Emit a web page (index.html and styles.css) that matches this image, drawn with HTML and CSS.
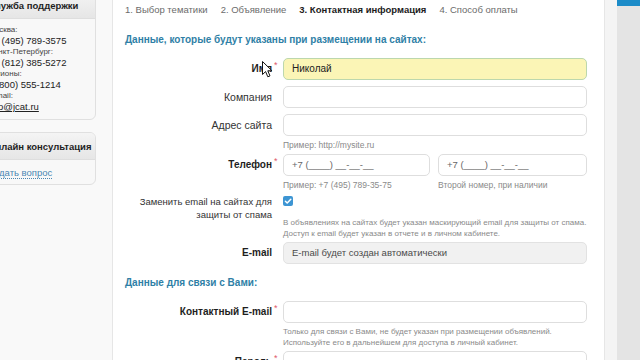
FILE: index.html
```html
<!DOCTYPE html>
<html lang="ru">
<head>
    <meta charset="UTF-8">
    <meta name="viewport" content="width=device-width, initial-scale=1.0">
    <title>Подача объявления — контактная информация</title>
    <link rel="stylesheet" href="styles.css">
</head>
<body>
    <div class="page">
        <aside class="sidebar">
            <div class="box box-support">
                <div class="box-head">Служба поддержки</div>
                <div class="box-body">
                    <div class="contact">
                        <span class="contact-label">Москва:</span>
                        <span class="contact-value">+7 (495) 789-3575</span>
                    </div>
                    <div class="contact">
                        <span class="contact-label">Санкт-Петербург:</span>
                        <span class="contact-value">+7 (812) 385-5272</span>
                    </div>
                    <div class="contact">
                        <span class="contact-label">Регионы:</span>
                        <span class="contact-value">8 (800) 555-1214</span>
                    </div>
                    <div class="contact">
                        <span class="contact-label">E-mail:</span>
                        <a href="#" class="contact-value contact-mail">info@jcat.ru</a>
                    </div>
                </div>
            </div>

            <div class="box">
                <div class="box-head">Онлайн консультация</div>
                <div class="box-body box-body-link">
                    <a href="#" class="ask-link">Задать вопрос</a>
                </div>
            </div>
        </aside>

        <main class="main">
            <nav class="steps">
                <span class="step">1. Выбор тематики</span>
                <span class="step">2. Объявление</span>
                <span class="step active">3. Контактная информация</span>
                <span class="step">4. Способ оплаты</span>
            </nav>

            <h2 class="section-title">Данные, которые будут указаны при размещении на сайтах:</h2>

            <div class="form">
                <div class="row row-name">
                    <div class="label bold">Имя<span class="star">*</span></div>
                    <div class="field">
                        <div class="input input-filled">Николай</div>
                    </div>
                    <svg class="cursor" width="12" height="17" viewBox="0 0 12 17">
                        <path d="M0.5 0.5 L0.5 13.5 L3.6 10.6 L5.8 15.8 L8 14.9 L5.8 9.8 L10 9.8 Z" fill="#fff" stroke="#111" stroke-width="1" stroke-linejoin="round"/>
                    </svg>
                </div>

                <div class="row">
                    <div class="label">Компания</div>
                    <div class="field">
                        <div class="input"></div>
                    </div>
                </div>

                <div class="row row-hint">
                    <div class="label">Адрес сайта</div>
                    <div class="field">
                        <div class="input"></div>
                        <div class="hint">Пример: http://mysite.ru</div>
                    </div>
                </div>

                <div class="row row-hint">
                    <div class="label bold">Телефон<span class="star">*</span></div>
                    <div class="field phones">
                        <div>
                            <div class="input input-mask">+7 (____) __-__-__</div>
                            <div class="hint">Пример: +7 (495) 789-35-75</div>
                        </div>
                        <div>
                            <div class="input input-mask">+7 (____) __-__-__</div>
                            <div class="hint">Второй номер, при наличии</div>
                        </div>
                    </div>
                </div>

                <div class="row row-check">
                    <div class="label label-multi">Заменить email на сайтах для<br>защиты от спама</div>
                    <div class="field">
                        <div class="check-line">
                            <span class="checkbox">
                                <svg width="10" height="10" viewBox="0 0 10 10">
                                    <path d="M2.4 5.2 L4.2 7 L7.8 3.2" fill="none" stroke="#fff" stroke-width="1.5" stroke-linecap="round" stroke-linejoin="round"/>
                                </svg>
                            </span>
                        </div>
                        <div class="hint hint-multi">В объявлениях на сайтах будет указан маскирующий email для защиты от спама.<br>Доступ к email будет указан в отчете и в личном кабинете.</div>
                    </div>
                </div>

                <div class="row">
                    <div class="label bold">E-mail</div>
                    <div class="field">
                        <div class="input input-disabled">E-mail будет создан автоматически</div>
                    </div>
                </div>
            </div>

            <h2 class="section-title section-contact">Данные для связи с Вами:</h2>

            <div class="form">
                <div class="row row-hint">
                    <div class="label bold">Контактный E-mail<span class="star">*</span></div>
                    <div class="field">
                        <div class="input"></div>
                        <div class="hint hint-multi">Только для связи с Вами, не будет указан при размещении объявлений.<br>Используйте его в дальнейшем для доступа в личный кабинет.</div>
                    </div>
                </div>

                <div class="row">
                    <div class="label bold">Пароль<span class="star">*</span></div>
                    <div class="field">
                        <div class="input"></div>
                    </div>
                </div>
            </div>
        </main>

        <div class="gutter"></div>
        <div class="rail"></div>
    </div>
</body>
</html>
```

FILE: styles.css
```css
:root {
    --text-color: #2b2b2b;
    --text-muted: #6b6b6b;
    --hint-color: #8a8a8a;
    --title-color: #2f7fa6;
    --border-color: #dedede;
    --panel-border: #e6e6e6;
    --page-bg: #f9f9f9;
    --link-color: #4a87b3;
    --star-color: #e0576b;
    --radius: 5px;
}

* {
    margin: 0;
    padding: 0;
    box-sizing: border-box;
}

html, body {
    height: 100%;
}

body {
    font-family: "Liberation Sans", Arial, sans-serif;
    color: var(--text-color);
    background: var(--page-bg);
    overflow: hidden;
}

.page {
    display: flex;
    height: 360px;
    overflow: hidden;
}

/* sidebar */

.sidebar {
    flex: none;
    width: 119px;
    margin-left: -23px;
    margin-top: -9px;
    display: flex;
    flex-direction: column;
    gap: 12px;
}

.box {
    background: #f8f8f8;
    border: 1px solid #e0e0e0;
    border-radius: 6px;
    overflow: hidden;
}

.box-head {
    padding: 7px 10px 6px;
    font-size: 9.5px;
    line-height: 13px;
    font-weight: bold;
    color: #1e1e1e;
    background: linear-gradient(#f4f4f4, #e6e6e6);
    border-bottom: 1px solid #dedede;
    white-space: nowrap;
}

.box-body {
    padding: 6px 10px 6px;
}

.contact {
    display: flex;
    flex-direction: column;
    white-space: nowrap;
}

.contact-label {
    font-size: 8px;
    line-height: 10px;
    color: #444;
}

.contact-value {
    font-size: 9.5px;
    line-height: 12px;
    color: #222;
}

.contact-mail {
    text-decoration: underline;
}

.box-body-link {
    padding: 6px 10px 5px;
    font-size: 9.5px;
    line-height: 13px;
}

.ask-link {
    color: var(--link-color);
    text-decoration: none;
    border-bottom: 1px dotted var(--link-color);
    white-space: nowrap;
}

/* main panel */

.main {
    flex: none;
    width: 493px;
    margin-left: 16px;
    background: #fff;
    border-left: 1px solid var(--panel-border);
    border-right: 1px solid var(--panel-border);
    padding: 3px 0 0 12px;
}

.steps {
    display: flex;
    gap: 13px;
    font-size: 9.5px;
    line-height: 14px;
    color: var(--text-muted);
    white-space: nowrap;
}

.step.active {
    color: #1c1c1c;
    font-weight: bold;
}

.section-title {
    margin-top: 16px;
    font-size: 10px;
    line-height: 14px;
    font-weight: bold;
    color: var(--title-color);
}

.section-contact {
    margin-top: 12px;
}

.form {
    margin-top: 11px;
}

.row {
    position: relative;
    display: grid;
    grid-template-columns: 158px 304px;
    margin-bottom: 6px;
}

.row-hint {
    margin-bottom: 3px;
}

.label {
    padding-right: 11px;
    text-align: right;
    font-size: 10.5px;
    line-height: 22px;
    color: #333;
    white-space: nowrap;
}

.label.bold {
    font-size: 10px;
    font-weight: bold;
    color: #1e1e1e;
}

.star {
    display: inline-block;
    width: 6px;
    margin-right: -8px;
    margin-left: 2px;
    font-weight: normal;
    font-size: 9px;
    line-height: 9px;
    vertical-align: 4px;
    color: var(--star-color);
    text-align: left;
}

.label-multi {
    font-size: 9.5px;
    line-height: 13px;
    padding-top: 1px;
}

.input {
    height: 22px;
    border: 1px solid var(--border-color);
    border-radius: var(--radius);
    background: #fff;
    padding: 0 8px;
    font-size: 10px;
    line-height: 20px;
    color: #222;
    white-space: nowrap;
}

.input-filled {
    background: #fbf5b6;
    border-color: #bcd7ad;
}

.input-mask {
    color: #666;
    font-size: 9.5px;
}

.input-disabled {
    background: #f1f1f1;
    border-color: #e2e2e2;
    color: #4a4a4a;
    font-size: 9.5px;
}

.phones {
    display: grid;
    grid-template-columns: 147px 149px;
    column-gap: 8px;
}

.hint {
    margin-top: 3px;
    font-size: 8.5px;
    line-height: 12px;
    color: var(--hint-color);
    white-space: nowrap;
}

.hint-multi {
    font-size: 8px;
    line-height: 11px;
}

.row-check {
    margin-bottom: 3px;
}

.check-line {
    height: 13px;
    display: flex;
    align-items: center;
}

.checkbox {
    width: 10px;
    height: 10px;
    border-radius: 2px;
    background: #3d95d3;
    display: flex;
}

.row-check .hint {
    margin-top: 10px;
}

.cursor {
    position: absolute;
    left: 137px;
    top: 3px;
}

/* right side */

.gutter {
    flex: none;
    width: 12px;
    background: #f4f4f4;
}

.rail {
    flex: 1;
    background: #e4e4e4;
    border-top: 6px solid #1b8bc8;
}
```
